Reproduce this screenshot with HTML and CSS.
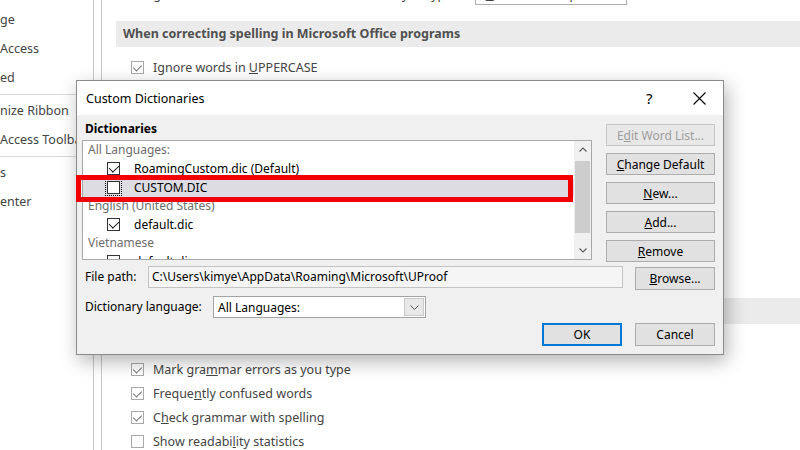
FILE: index.html
```html
<!DOCTYPE html>
<html lang="en">
<head>
  <meta charset="UTF-8" />
  <meta name="viewport" content="width=device-width, initial-scale=1.0" />
  <title>Word Options - Proofing</title>
  <link rel="stylesheet" href="styles.css">
</head>
<body>
  <div class="window">
    <aside class="sidebar">
      <div class="side-group">
        <div class="side-item">ge</div>
        <div class="side-item">Access</div>
        <div class="side-item">ed</div>
      </div>
      <div class="side-group">
        <div class="side-item">nize Ribbon</div>
        <div class="side-item">Access Toolbar</div>
      </div>
      <div class="side-group">
        <div class="side-item">s</div>
        <div class="side-item">enter</div>
      </div>
    </aside>

    <main class="main">
      <div class="top-row">
        <span class="top-label">Change how Word corrects and formats text as you type:</span>
        <button class="top-btn"><u>A</u>utoCorrect Options...</button>
      </div>

      <div class="band">When correcting spelling in Microsoft Office programs</div>
      <div class="checks">
        <label class="check"><span class="cb on"></span><span>Ignore words in <u>U</u>PPERCASE</span></label>
      </div>

      <!-- second section, its title sits behind the dialog -->
      <div class="band band-gap"></div>
      <div class="checks checks-lower">
        <label class="check"><span class="cb on"></span><span>Mark gra<u>m</u>mar errors as you type</span></label>
        <label class="check"><span class="cb on"></span><span>Freque<u>n</u>tly confused words</span></label>
        <label class="check"><span class="cb on"></span><span>C<u>h</u>eck grammar with spelling</span></label>
        <label class="check"><span class="cb"></span><span>Show readabi<u>l</u>ity statistics</span></label>
      </div>
    </main>
  </div>

  <div class="dialog">
    <div class="dlg-title">
      <span class="title">Custom Dictionaries</span>
      <span class="help">?</span>
      <svg class="close" width="13" height="13" viewBox="0 0 13 13">
        <path d="M0.5 0.5 L12.5 12.5 M12.5 0.5 L0.5 12.5" stroke="#000" stroke-width="1.1" fill="none"/>
      </svg>
    </div>

    <div class="dlg-body">
      <div class="dict-area">
        <div class="dict-left">
          <div class="section-label">Dictionaries</div>
          <div class="dict-list">
            <div class="dict-items">
              <div class="group">All Languages:</div>
              <div class="dict"><span class="box on"></span><span>RoamingCustom.dic (Default)</span></div>
              <div class="dict selected"><span class="box focus"></span><span>CUSTOM.DIC</span></div>
              <div class="group">English (United States)</div>
              <div class="dict"><span class="box on"></span><span>default.dic</span></div>
              <div class="group">Vietnamese</div>
              <div class="dict"><span class="box on"></span><span>default.dic</span></div>
            </div>
            <div class="scrollbar">
              <div class="arrow">
                <svg width="8" height="5" viewBox="0 0 8 5"><path d="M0.5 4.5 L4 1 L7.5 4.5" stroke="#606060" stroke-width="1.2" fill="none"/></svg>
              </div>
              <div class="thumb"></div>
              <div class="arrow arrow-down">
                <svg width="8" height="5" viewBox="0 0 8 5"><path d="M0.5 0.5 L4 4 L7.5 0.5" stroke="#606060" stroke-width="1.2" fill="none"/></svg>
              </div>
            </div>
          </div>
        </div>
        <div class="dict-buttons">
          <button class="btn" disabled>E<u>d</u>it Word List...</button>
          <button class="btn"><u>C</u>hange Default</button>
          <button class="btn"><u>N</u>ew...</button>
          <button class="btn"><u>A</u>dd...</button>
          <button class="btn"><u>R</u>emove</button>
        </div>
      </div>

      <div class="path-row">
        <span class="row-label path-label">File path:</span>
        <div class="path-input">C:\Users\kimye\AppData\Roaming\Microsoft\UProof</div>
        <button class="btn browse"><u>B</u>rowse...</button>
      </div>

      <div class="lang-row">
        <span class="row-label lang-label">Dictionary language:</span>
        <div class="select">
          <span class="select-text">All Languages:</span>
          <span class="select-arrow">
            <svg width="9" height="5" viewBox="0 0 9 5"><path d="M0.5 0.5 L4.5 4.5 L8.5 0.5" stroke="#555" stroke-width="1" fill="none"/></svg>
          </span>
        </div>
      </div>

      <div class="ok-row">
        <button class="btn wide default">OK</button>
        <button class="btn wide">Cancel</button>
      </div>
    </div>
  </div>

  <div class="highlight"></div>
</body>
</html>
```

FILE: styles.css
```css
* {
  box-sizing: border-box;
}

body {
  margin: 0;
  width: 800px;
  height: 450px;
  overflow: hidden;
  position: relative;
  background-color: #fff;
  font-family: "Noto Sans", "Open Sans", sans-serif;
  color: #444;
}

.window {
  display: flex;
  height: 450px;
}

/* left options list, scrolled so only word ends show */
.sidebar {
  width: 94px;
  flex-shrink: 0;
  border-right: 1px solid #c9c9c9;
  padding-top: 5px;
  font-size: 12.5px;
  overflow: hidden;
}

.side-group {
  padding: 1px 0 2px;
  border-bottom: 1px solid #dadada;
}

.side-group:first-child {
  padding-top: 0;
}

.side-group:last-child {
  border-bottom: none;
}

.side-item {
  height: 29px;
  line-height: 29px;
  white-space: nowrap;
}

.main {
  flex: 1;
  margin-left: 7px;
  border-left: 1px solid #c9c9c9;
  font-size: 12.5px;
}

.top-row {
  display: flex;
  align-items: center;
  height: 22px;
  margin-top: -17px;
  padding-left: 21px;
}

.top-label {
  width: 352px;
  white-space: nowrap;
}

.top-btn {
  width: 152px;
  height: 22px;
  border: 1px solid #adadad;
  background-color: #fff;
  font: inherit;
  color: #444;
}

.band {
  margin-top: 16px;
  margin-left: 14px;
  height: 26px;
  line-height: 26px;
  padding-left: 7px;
  background-color: #ebebeb;
  font-weight: bold;
  color: #505050;
}

.band-gap {
  margin-top: 219px;
}

.checks {
  margin-top: 8px;
  padding-left: 29px;
}

.checks-lower {
  margin-top: 33px;
}

.check {
  display: flex;
  align-items: center;
  height: 24px;
  gap: 9px;
  white-space: nowrap;
}

.cb {
  width: 13px;
  height: 13px;
  border: 1px solid #a8a8a8;
  background-color: #fff;
  position: relative;
}

.cb.on::after {
  content: "";
  position: absolute;
  left: 3px;
  top: 1px;
  width: 4px;
  height: 7px;
  border-right: 1px solid #707070;
  border-bottom: 1px solid #707070;
  transform: rotate(45deg);
}

/* dialog */
.dialog {
  position: absolute;
  left: 76px;
  top: 80px;
  width: 648px;
  background-color: #f0f0f0;
  border: 1px solid #8a8a8a;
  box-shadow: 3px 6px 18px rgba(0, 0, 0, 0.3);
  font-size: 12px;
  color: #000;
}

.dlg-title {
  display: flex;
  align-items: center;
  height: 34px;
  padding-left: 9px;
  background-color: #fff;
  font-size: 12.5px;
}

.title {
  flex: 1;
}

.help {
  width: 8px;
  margin-right: 39px;
  font-size: 15px;
}

.close {
  margin-right: 17px;
}

.dlg-body {
  padding: 6px 8px 8px 5px;
}

.dict-area {
  display: flex;
  gap: 14px;
}

.dict-left {
  width: 510px;
}

.section-label {
  font-weight: bold;
  line-height: 16px;
  padding-left: 3px;
  margin-bottom: 3px;
}

.dict-list {
  display: flex;
  height: 120px;
  border: 1px solid #a8a8a8;
  background-color: #fff;
}

.dict-items {
  flex: 1;
  overflow: hidden;
}

.group {
  height: 18px;
  line-height: 18px;
  padding-left: 5px;
  color: #6d6d6d;
}

.dict {
  display: flex;
  align-items: center;
  gap: 14px;
  height: 19px;
  padding-left: 24px;
}

.dict.selected {
  background-color: #dcdce2;
}

.box {
  width: 13px;
  height: 13px;
  border: 1px solid #333;
  background-color: #fff;
  position: relative;
}

.box.on::after {
  content: "";
  position: absolute;
  left: 3px;
  top: 0;
  width: 5px;
  height: 8px;
  border-right: 1.3px solid #222;
  border-bottom: 1.3px solid #222;
  transform: rotate(45deg);
}

.box.focus {
  outline: 1px dotted #000;
  outline-offset: 1px;
}

.scrollbar {
  width: 17px;
  display: flex;
  flex-direction: column;
  background-color: #f0f0f0;
}

.arrow {
  height: 17px;
  display: flex;
  align-items: center;
  justify-content: center;
}

.arrow-down {
  margin-top: auto;
}

.thumb {
  height: 72px;
  margin: 3px 1px 0;
  background-color: #cdcdcd;
}

.dict-buttons {
  width: 109px;
  margin-top: 3px;
  display: flex;
  flex-direction: column;
  gap: 7px;
}

.btn {
  height: 22px;
  padding: 0;
  border: 1px solid #adadad;
  background-color: #e1e1e1;
  font: inherit;
  color: #000;
  text-align: center;
}

.btn:disabled {
  border-color: #c6c6c6;
  background-color: #e8e8e8;
  color: #9d9d9d;
}

.path-row {
  display: flex;
  align-items: flex-start;
  margin-top: 4px;
}

.row-label {
  padding-left: 3px;
  line-height: 22px;
  white-space: nowrap;
}

.path-label {
  width: 66px;
}

.path-input {
  flex: 1;
  height: 22px;
  line-height: 20px;
  margin-right: 12px;
  padding-left: 3px;
  border: 1px solid #c3c3c3;
  background-color: #f5f5f5;
  white-space: nowrap;
}

.browse {
  width: 80px;
  height: 23px;
  margin-top: 1px;
}

.lang-row {
  display: flex;
  margin-top: 6px;
}

.lang-label {
  width: 131px;
}

.select {
  display: flex;
  align-items: center;
  width: 213px;
  height: 22px;
  padding: 1px;
  border: 1px solid #a3a3a3;
  background-color: #fff;
}

.select-text {
  flex: 1;
  padding-left: 3px;
}

.select-arrow {
  width: 20px;
  height: 18px;
  display: flex;
  align-items: center;
  justify-content: center;
  border: 1px solid #c9c9c9;
  background-color: #e8e8e8;
}

.ok-row {
  display: flex;
  justify-content: flex-end;
  gap: 13px;
  margin-top: 5px;
}

.wide {
  width: 80px;
  height: 23px;
}

.default {
  border-color: #0078d7;
  box-shadow: inset 0 0 0 1px #0078d7;
}

/* red annotation box drawn over the screenshot */
.highlight {
  position: absolute;
  left: 76px;
  top: 175px;
  width: 497px;
  height: 27px;
  border: 5px solid #f20000;
}
```
